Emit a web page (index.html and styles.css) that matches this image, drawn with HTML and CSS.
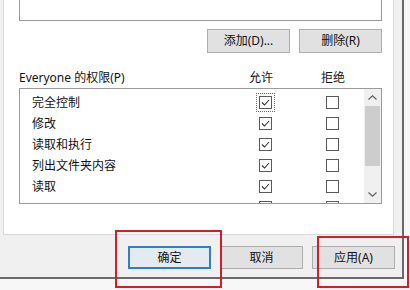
FILE: index.html
```html
<!DOCTYPE html>
<html lang="zh-CN">
<head>
<meta charset="utf-8">
<title>Everyone 的权限</title>
<link rel="stylesheet" href="styles.css">
</head>
<body>
<div class="screen">
  <div class="window">
    <div class="page">
      <div class="topbox"></div>
      <div class="btnrow">
        <button class="btn">添加(D)...</button>
        <button class="btn">删除(R)</button>
      </div>
      <div class="perm-head">
        <span class="name">Everyone 的权限(P)</span>
        <span class="col">允许</span>
        <span class="col">拒绝</span>
      </div>
      <div class="perm-list">
        <div class="rows">
          <div class="row">
            <span class="name">完全控制</span>
            <span class="cell"><span class="cb focus"><svg viewBox="0 0 11 11" class="tick"><path d="M2 5.5 L4.5 8 L9 3"/></svg></span></span>
            <span class="cell"><span class="cb"></span></span>
          </div>
          <div class="row">
            <span class="name">修改</span>
            <span class="cell"><span class="cb"><svg viewBox="0 0 11 11" class="tick"><path d="M2 5.5 L4.5 8 L9 3"/></svg></span></span>
            <span class="cell"><span class="cb"></span></span>
          </div>
          <div class="row">
            <span class="name">读取和执行</span>
            <span class="cell"><span class="cb"><svg viewBox="0 0 11 11" class="tick"><path d="M2 5.5 L4.5 8 L9 3"/></svg></span></span>
            <span class="cell"><span class="cb"></span></span>
          </div>
          <div class="row">
            <span class="name">列出文件夹内容</span>
            <span class="cell"><span class="cb"><svg viewBox="0 0 11 11" class="tick"><path d="M2 5.5 L4.5 8 L9 3"/></svg></span></span>
            <span class="cell"><span class="cb"></span></span>
          </div>
          <div class="row">
            <span class="name">读取</span>
            <span class="cell"><span class="cb"><svg viewBox="0 0 11 11" class="tick"><path d="M2 5.5 L4.5 8 L9 3"/></svg></span></span>
            <span class="cell"><span class="cb"></span></span>
          </div>
          <div class="row">
            <span class="name"></span>
            <span class="cell"><span class="cb"></span></span>
            <span class="cell"><span class="cb"></span></span>
          </div>
        </div>
        <div class="scrollbar">
          <div class="sb-btn"><svg viewBox="0 0 9 5" class="arrow"><path d="M0.5 4.5 L4.5 0.8 L8.5 4.5"/></svg></div>
          <div class="sb-track"><div class="sb-thumb"></div></div>
          <div class="sb-btn"><svg viewBox="0 0 9 5" class="arrow"><path d="M0.5 0.5 L4.5 4.2 L8.5 0.5"/></svg></div>
        </div>
      </div>
    </div>
    <div class="footer">
      <button class="btn btn-default">确定</button>
      <button class="btn">取消</button>
      <button class="btn">应用(A)</button>
    </div>
  </div>
  <div class="mark mark-ok"></div>
  <div class="mark mark-apply"></div>
</div>
</body>
</html>
```
FILE: styles.css
```css
* { box-sizing: border-box; }

html, body {
  margin: 0;
  padding: 0;
}

body {
  width: 410px;
  height: 290px;
  overflow: hidden;
  background: #f7f7f7;
  font-family: "Noto Sans", "Noto Sans CJK SC", sans-serif;
  font-size: 12px;
  color: #111;
}

.screen {
  position: relative;
  width: 410px;
  height: 290px;
}

.window {
  width: 404px;
  height: 279px;
  background: #f0f0f0;
  border-right: 2px solid #6a6a6a;
  border-bottom: 2px solid #6a6a6a;
  display: flex;
  flex-direction: column;
}

.page {
  margin-left: 3px;
  width: 391px;
  height: 235px;
  background: #fff;
  border: 1px solid #d9d9d9;
  border-top: none;
  padding: 0 11px 0 15px;
  display: flex;
  flex-direction: column;
}

.topbox {
  height: 21px;
  border: 1px solid #9a9a9a;
  border-top: none;
}

.btnrow {
  margin-top: 8px;
  display: flex;
  justify-content: flex-end;
  gap: 9px;
}

.btn {
  width: 83px;
  height: 24px;
  padding: 0;
  margin: 0;
  background: #e1e1e1;
  border: 1px solid #adadad;
  font-family: "Noto Sans", "Noto Sans CJK SC", sans-serif;
  font-size: 12px;
  color: #111;
  line-height: 20px;
  text-align: center;
}

.perm-head {
  margin-top: 17px;
  height: 16px;
  line-height: 16px;
  display: grid;
  grid-template-columns: 1fr 40px 40px;
  column-gap: 32px;
  padding-right: 29px;
}

.col {
  text-align: center;
}

.perm-list {
  margin-top: 2px;
  height: 116px;
  border: 1px solid #9a9a9a;
  display: flex;
  overflow: hidden;
}

.rows {
  flex: 1;
  padding-top: 3px;
  overflow: hidden;
}

.row {
  height: 21px;
  display: grid;
  grid-template-columns: 1fr 40px 40px;
  column-gap: 27px;
  padding: 0 12px;
  align-items: center;
  line-height: 21px;
}

.cell {
  display: flex;
  justify-content: center;
  align-items: center;
}

.cb {
  width: 13px;
  height: 13px;
  border: 1px solid #5a5a5a;
  background: #fff;
  display: flex;
  align-items: center;
  justify-content: center;
}

.cb.focus {
  outline: 1px dotted #6a6a6a;
  outline-offset: 2px;
}

.tick {
  width: 11px;
  height: 11px;
  fill: none;
  stroke: #333;
  stroke-width: 1.1;
}

.scrollbar {
  width: 17px;
  background: #f0f0f0;
  display: flex;
  flex-direction: column;
}

.sb-btn {
  height: 17px;
  display: flex;
  align-items: center;
  justify-content: center;
}

.arrow {
  width: 9px;
  height: 5px;
  fill: none;
  stroke: #606060;
  stroke-width: 1.2;
}

.sb-track {
  flex: 1;
  padding: 0 1px;
}

.sb-thumb {
  height: 60px;
  background: #cdcdcd;
}

.footer {
  flex: 1;
  display: flex;
  justify-content: flex-end;
  gap: 9px;
  padding: 11px 7px 0 0;
}

.footer .btn {
  height: 23px;
}

.btn-default {
  border: 2px solid #2f7fc8;
  background: #e4eaf0;
  line-height: 19px;
}

.mark {
  position: absolute;
  border: 2px solid #d11f2a;
}

.mark-ok {
  left: 115px;
  top: 230px;
  width: 107px;
  height: 58px;
}

.mark-apply {
  left: 317px;
  top: 236px;
  width: 92px;
  height: 52px;
}
```
